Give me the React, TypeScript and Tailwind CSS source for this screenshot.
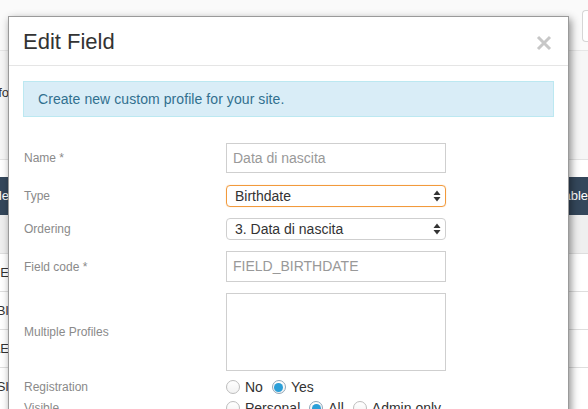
import React from "react";

const font = { fontFamily: '"Liberation Sans", Arial, Helvetica, sans-serif' };

function Cut({ text, className = "" }: { text: string; className?: string }) {
  return (
    <div className="w-[9px] overflow-hidden flex justify-end shrink-0">
      <span className={"whitespace-nowrap text-[13px] " + className}>{text}</span>
    </div>
  );
}

function Arrows() {
  return (
    <svg width="8" height="12" viewBox="0 0 8 12" className="shrink-0">
      <path d="M4 0.5 L7.5 5 L0.5 5 Z" fill="#333" />
      <path d="M4 11.5 L7.5 7 L0.5 7 Z" fill="#333" />
    </svg>
  );
}

function Radio({ checked }: { checked?: boolean }) {
  return (
    <span
      className={
        "w-[14px] h-[14px] rounded-full border flex items-center justify-center shrink-0 bg-gradient-to-b from-white to-[#f2f2f2] " +
        (checked ? "border-[#8fa6b8]" : "border-[#bdbdbd]")
      }
    >
      {checked && <span className="w-[9px] h-[9px] rounded-full bg-[#2b9fd8]" />}
    </span>
  );
}

function Label({ children }: { children: React.ReactNode }) {
  return <div className="w-[202px] text-[12px] text-[#8a8a8a] shrink-0">{children}</div>;
}

export default function App() {
  return (
    <div className="relative w-[588px] h-[409px] overflow-hidden bg-white" style={font}>
      {/* background page */}
      <div className="flex flex-col">
        <div className="h-[51px] bg-[#fafafa] border-b border-[#e6e6e6] flex justify-end pt-[10px]">
          <div className="w-[6px] h-[32px] border border-[#d6d6d6] rounded-l-[4px] border-r-0 bg-white" />
        </div>
        <div className="h-[109px] bg-[#f6f6f6] flex items-start pt-[32px] border-b border-[#e2e2e2]">
          <Cut text="Info" className="text-[#333]" />
        </div>
        <div className="h-[17px] bg-white" />
        <div className="h-[38px] bg-[#34475b] flex items-center justify-between">
          <Cut text="Code" className="text-white" />
          <span className="text-white text-[13px] whitespace-nowrap pl-[2px]">nable</span>
        </div>
        <div className="h-[38px] bg-[#efefef]" />
        {["GE", "BI", "AE", "SI"].map((t) => (
          <div key={t} className="h-[38px] border-t border-[#dedede] flex items-center bg-white">
            <Cut text={t} className="text-[#333] uppercase" />
          </div>
        ))}
      </div>

      {/* modal */}
      <div className="absolute left-[8px] top-[16px] w-[561px] h-[420px] bg-white border border-[#9a9a9a] shadow-[2px_3px_8px_rgba(0,0,0,0.45)]">
        <div className="h-[49px] border-b border-[#e5e5e5] flex items-center justify-between pl-[14px] pr-[16px] pt-[2px]">
          <h4 className="text-[22px] text-[#333] leading-none">Edit Field</h4>
          <svg width="16" height="16" viewBox="0 0 16 16" className="mt-[2px]">
            <path d="M2 2 L14 14 M14 2 L2 14" stroke="#c7c7c7" strokeWidth="3" />
          </svg>
        </div>
        <div className="px-[14px] pt-[15px]">
          <div className="h-[36px] bg-[#d9edf7] border border-[#bce8f1] text-[#31708f] text-[14px] flex items-center pl-[14px] tracking-[0.07px]">
            Create new custom profile for your site.
          </div>

          <div className="mt-[26px] flex flex-col pl-[1px]">
            <div className="flex items-center h-[30px]">
              <Label>Name *</Label>
              <div className="w-[220px] h-[30px] border border-[#cfcfcf] flex items-center pl-[6px] text-[14px] text-[#999]">
                Data di nascita
              </div>
            </div>

            <div className="flex items-center h-[22px] mt-[12px]">
              <Label>Type</Label>
              <div className="w-[220px] h-[22px] border border-[#f29a3c] rounded-[4px] flex items-center justify-between pl-[8px] pr-[4px] text-[14px] text-[#333] shadow-[0_0_1px_rgba(242,154,60,0.6)]">
                Birthdate
                <Arrows />
              </div>
            </div>

            <div className="flex items-center h-[22px] mt-[11px]">
              <Label>Ordering</Label>
              <div className="w-[220px] h-[22px] border border-[#cfcfcf] rounded-[4px] flex items-center justify-between pl-[8px] pr-[4px] text-[14px] text-[#333]">
                3. Data di nascita
                <Arrows />
              </div>
            </div>

            <div className="flex items-center h-[31px] mt-[11px]">
              <Label>Field code *</Label>
              <div className="w-[220px] h-[31px] border border-[#cfcfcf] flex items-center pl-[6px] text-[14px] text-[#999]">
                FIELD_BIRTHDATE
              </div>
            </div>

            <div className="flex items-center h-[78px] mt-[11px]">
              <Label>Multiple Profiles</Label>
              <div className="w-[220px] h-[78px] border border-[#cfcfcf]" />
            </div>

            <div className="flex items-center h-[20px] mt-[6px]">
              <Label>Registration</Label>
              <div className="flex items-center text-[14px] text-[#333]">
                <Radio />
                <span className="ml-[5px] mr-[9px]">No</span>
                <Radio checked />
                <span className="ml-[5px]">Yes</span>
              </div>
            </div>

            <div className="flex items-center h-[20px] mt-[1px]">
              <Label>Visible</Label>
              <div className="flex items-center text-[14px] text-[#333]">
                <Radio />
                <span className="ml-[5px] mr-[9px]">Personal</span>
                <Radio checked />
                <span className="ml-[5px] mr-[9px]">All</span>
                <Radio />
                <span className="ml-[5px]">Admin only</span>
              </div>
            </div>
          </div>
        </div>
      </div>
    </div>
  );
}
